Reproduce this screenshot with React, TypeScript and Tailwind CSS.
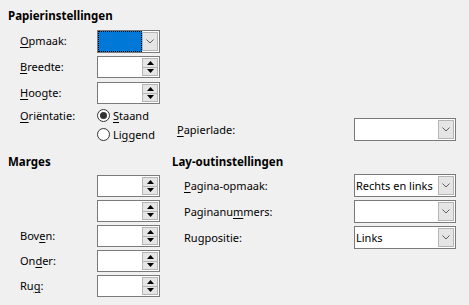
import React from 'react'

function Chevron() {
  return (
    <svg width="8" height="5" viewBox="0 0 8 5" className="block">
      <path d="M0.5 0.5 L4 4 L7.5 0.5" fill="none" stroke="#606060" strokeWidth="1" />
    </svg>
  )
}

function Combo({ value = '', width, focused = false }: { value?: string; width: string; focused?: boolean }) {
  return (
    <div className={`${width} h-[23px] border border-[#7a7a7a] bg-white flex`}>
      {focused ? (
        <div className="flex-1 border border-dotted border-black bg-[#0078d7]" />
      ) : (
        <div className="flex-1 pl-[1px] leading-[21px] whitespace-nowrap overflow-hidden">{value}</div>
      )}
      <div className="w-[16px] m-[1px] ml-0 border border-[#b4b4b4] bg-[#e5e5e5] flex items-center justify-center">
        <Chevron />
      </div>
    </div>
  )
}

function Arrow({ up }: { up?: boolean }) {
  return (
    <svg width="7" height="4" viewBox="0 0 7 4" className="block">
      {up ? <polygon points="0,4 3.5,0 7,4" fill="#000" /> : <polygon points="0,0 3.5,4 7,0" fill="#000" />}
    </svg>
  )
}

function Spin() {
  return (
    <div className="w-[63px] h-[22px] border border-[#7a7a7a] bg-white flex justify-end p-[1px]">
      <div className="w-[16px] flex flex-col">
        <div className="flex-1 border border-[#b4b4b4] bg-[#e5e5e5] flex items-center justify-center">
          <Arrow up />
        </div>
        <div className="flex-1 border border-t-0 border-[#b4b4b4] bg-[#e5e5e5] flex items-center justify-center">
          <Arrow />
        </div>
      </div>
    </div>
  )
}

function Row({ label, children }: { label: React.ReactNode; children: React.ReactNode }) {
  return (
    <div className="flex items-center h-[22px]">
      <span className="w-[77px]">{label}</span>
      {children}
    </div>
  )
}

function Radio({ checked, children }: { checked?: boolean; children: React.ReactNode }) {
  return (
    <div className="flex items-center h-[19px] gap-[3px]">
      <span className="w-[13px] h-[13px] rounded-full border border-[#333] bg-white flex items-center justify-center">
        {checked && <span className="w-[7px] h-[7px] rounded-full bg-[#333]" />}
      </span>
      <span>{children}</span>
    </div>
  )
}

const U = ({ children }: { children: React.ReactNode }) => (
  <u className="underline decoration-1 underline-offset-2">{children}</u>
)

export default function App() {
  return (
    <div className="w-[469px] h-[305px] overflow-hidden bg-[#f0f0f0] text-black text-[11px] leading-[16px] font-['Noto_Sans',sans-serif] pt-[8px]">
      <div className="flex">
        <div className="w-[172px] pl-[8px]">
          <h2 className="font-bold text-[11.5px]">Papierinstellingen</h2>
          <div className="mt-[6px] pl-[12px] flex flex-col gap-[4px]">
            <Row label={<><U>O</U>pmaak:</>}>
              <Combo width="w-[63px]" focused />
            </Row>
            <Row label={<><U>B</U>reedte:</>}>
              <Spin />
            </Row>
            <Row label={<><U>H</U>oogte:</>}>
              <Spin />
            </Row>
          </div>
          <div className="mt-[2px] pl-[12px] flex">
            <span className="w-[77px] leading-[19px]"><U>O</U>riëntatie:</span>
            <div className="flex flex-col">
              <Radio checked><U>S</U>taand</Radio>
              <Radio>Li<U>g</U>gend</Radio>
            </div>
          </div>
        </div>
        <div className="mt-[110px] flex items-center h-[23px]">
          <span className="w-[182px] pl-[5px]"><U>P</U>apierlade:</span>
          <Combo width="w-[102px]" />
        </div>
      </div>

      <div className="flex mt-[10px]">
        <div className="w-[172px] pl-[8px]">
          <h2 className="font-bold text-[11.5px]">Marges</h2>
          <div className="mt-[5px] pl-[12px] flex flex-col gap-[3px]">
            <Row label="">
              <Spin />
            </Row>
            <Row label="">
              <Spin />
            </Row>
            <Row label={<>Bov<U>e</U>n:</>}>
              <Spin />
            </Row>
            <Row label={<>On<U>d</U>er:</>}>
              <Spin />
            </Row>
            <Row label={<>Ru<U>g</U>:</>}>
              <Spin />
            </Row>
          </div>
        </div>
        <div>
          <h2 className="font-bold text-[11.5px]">Lay-outinstellingen</h2>
          <div className="mt-[4px] flex flex-col gap-[3px]">
            <div className="flex items-center h-[23px]">
              <span className="w-[182px] pl-[12px]"><U>P</U>agina-opmaak:</span>
              <Combo width="w-[102px]" value="Rechts en links" />
            </div>
            <div className="flex items-center h-[23px]">
              <span className="w-[182px] pl-[12px]">Paginanu<U>m</U>mers:</span>
              <Combo width="w-[102px]" />
            </div>
            <div className="flex items-center h-[23px]">
              <span className="w-[182px] pl-[12px]">Rugpositie:</span>
              <Combo width="w-[102px]" value="Links" />
            </div>
          </div>
        </div>
      </div>
    </div>
  )
}
